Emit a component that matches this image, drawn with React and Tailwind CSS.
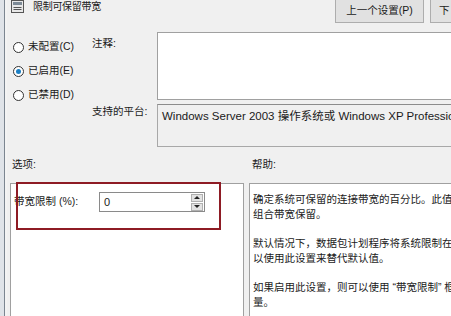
import React from 'react';

const font = { fontFamily: '"Liberation Sans", "Noto Sans CJK SC", sans-serif' };

const Radio = ({ label, checked }) => (
  <div className="flex items-center gap-[4px] h-[24px]">
    <span className="w-[11px] h-[11px] rounded-full border border-[#333] bg-white flex items-center justify-center">
      {checked && <span className="w-[5px] h-[5px] rounded-full bg-[#1a7fc4]" />}
    </span>
    <span className="text-[10.5px] text-[#1a1a1a]">{label}</span>
  </div>
);

const PolicyIcon = () => (
  <svg width="13" height="13" viewBox="0 0 13 13" className="shrink-0">
    <rect x="0.5" y="0.5" width="12" height="12" fill="#e8e8e8" stroke="#555" />
    <rect x="2" y="2" width="9" height="3" fill="#7d8a96" />
    <line x1="2.5" y1="7.5" x2="10.5" y2="7.5" stroke="#555" />
    <line x1="2.5" y1="9.5" x2="10.5" y2="9.5" stroke="#555" />
  </svg>
);

export default function App() {
  return (
    <div style={font} className="w-[451px] h-[316px] overflow-hidden bg-[#f0f0f0] flex text-[#1a1a1a]">
      {/* window edge behind */}
      <div className="w-[7px] shrink-0 flex bg-[#fafafa]">
        <div className="w-[4px] bg-[#dfe3e8]" />
        <div className="w-[1px] bg-[#7b8590]" />
        <div className="w-[2px] bg-[#f3f3f3]" />
      </div>

      <div className="flex-1 flex flex-col min-w-0">
        {/* header */}
        <div className="h-[32px] flex items-start shrink-0">
          <div className="flex items-center gap-[9px] ml-[4px] mt-[-1px]">
            <PolicyIcon />
            <span className="text-[10px] tracking-[-0.3px]">限制可保留带宽</span>
          </div>
          <div className="flex-1" />
          <div className="flex gap-[6px] mt-[-2px]">
            <button className="w-[89px] h-[25px] border border-[#adadad] bg-[#e1e1e1] text-[10.5px] pt-[1px]">上一个设置(P)</button>
            <button className="w-[40px] h-[25px] border border-[#adadad] border-r-0 bg-[#e1e1e1] text-[10.5px] text-left pl-[8px] pt-[1px] mr-[-19px]">下</button>
          </div>
        </div>

        {/* top section */}
        <div className="flex shrink-0">
          <div className="w-[85px] shrink-0 pl-[6px] pt-[3px]">
            <Radio label="未配置(C)" />
            <Radio label="已启用(E)" checked />
            <Radio label="已禁用(D)" />
          </div>
          <div className="w-[65px] shrink-0 relative">
            <div className="text-[10.5px] leading-[15px] mt-[4px]">注释:</div>
            <div className="text-[10.5px] leading-[15px] mt-[53px]">支持的平台:</div>
          </div>
          <div className="flex-1 flex flex-col gap-[4px]">
            <div className="h-[68px] border border-r-0 border-[#a0a0a0] bg-white" />
            <div className="h-[43px] border border-r-0 border-[#a8a8a8] border-t-[#8c8c8c] bg-[#f0f0f0] pl-[4px] pt-[3px] whitespace-nowrap text-[11.5px] leading-[16px]">
              Windows Server 2003 操作系统或 Windows XP Professional
            </div>
          </div>
        </div>

        {/* section labels */}
        <div className="h-[36px] flex items-center shrink-0 text-[10.5px]">
          <span className="ml-[5px] w-[240px]">选项:</span>
          <span>帮助:</span>
        </div>

        {/* panels */}
        <div className="flex-1 flex gap-[5px] min-h-0">
          <div className="relative w-[234px] ml-[3px] shrink-0 bg-white border border-b-0 border-[#a0a0a0]">
            <div className="flex items-center h-[20px] mt-[8px]">
              <span className="text-[10.5px] ml-[3px] w-[85px]">带宽限制 (%):</span>
              <div className="w-[106px] h-[20px] border border-[#8a8a8a] bg-white flex items-center">
                <span className="flex-1 text-[11px] pl-[4px]">0</span>
                <div className="w-[12px] h-[17px] mr-[1px] flex flex-col gap-[1px]">
                  <div className="flex-1 bg-[#e2e2e2] border border-[#b0b0b0] flex items-center justify-center">
                    <span className="w-0 h-0 border-l-[3px] border-r-[3px] border-b-[3px] border-l-transparent border-r-transparent border-b-[#222]" />
                  </div>
                  <div className="flex-1 bg-[#e2e2e2] border border-[#b0b0b0] flex items-center justify-center">
                    <span className="w-0 h-0 border-l-[3px] border-r-[3px] border-t-[3px] border-l-transparent border-r-transparent border-t-[#222]" />
                  </div>
                </div>
              </div>
            </div>
            {/* red highlight */}
            <div className="absolute left-[5px] top-[-2px] w-[205px] h-[48px] border-2 border-[#8e1b24]" />
          </div>
          <div className="flex-1 bg-white border border-r-0 border-b-0 border-[#a0a0a0] pl-[3px] pt-[8px] text-[10.5px] leading-[14.7px] whitespace-nowrap overflow-hidden">
            <div>确定系统可保留的连接带宽的百分比。此值限制所有程序的</div>
            <div>组合带宽保留。</div>
            <div className="h-[14.7px]" />
            <div>默认情况下，数据包计划程序将系统限制在连接带宽的 80%</div>
            <div>以使用此设置来替代默认值。</div>
            <div className="h-[14.7px]" />
            <div>如果启用此设置，则可以使用 “带宽限制” 框调整系统可以保留的带宽</div>
            <div>量。</div>
          </div>
        </div>
      </div>
    </div>
  );
}
